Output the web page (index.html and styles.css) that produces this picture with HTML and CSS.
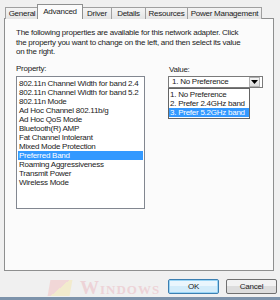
FILE: index.html
```html
<!DOCTYPE html>
<html lang="en">
<head>
  <meta charset="UTF-8">
  <title>Adapter Properties - Advanced</title>
  <link rel="stylesheet" href="styles.css">
</head>
<body>
  <div class="dialog">
    <div class="tabs">
      <div class="tab tab-general">General</div>
      <div class="tab tab-advanced active">Advanced</div>
      <div class="tab tab-driver">Driver</div>
      <div class="tab tab-details">Details</div>
      <div class="tab tab-resources">Resources</div>
      <div class="tab tab-power">Power Management</div>
    </div>

    <div class="panel">
      <p class="intro">The following properties are available for this network adapter. Click the property you want to change on the left, and then select its value on the right.</p>

      <div class="columns">
        <div class="prop-col">
          <div class="label">Property:</div>
          <ul class="listbox">
            <li>802.11n Channel Width for band 2.4</li>
            <li>802.11n Channel Width for band 5.2</li>
            <li>802.11n Mode</li>
            <li>Ad Hoc Channel 802.11b/g</li>
            <li>Ad Hoc QoS Mode</li>
            <li>Bluetooth(R) AMP</li>
            <li>Fat Channel Intolerant</li>
            <li>Mixed Mode Protection</li>
            <li class="selected">Preferred Band</li>
            <li>Roaming Aggressiveness</li>
            <li>Transmit Power</li>
            <li>Wireless Mode</li>
          </ul>
        </div>

        <div class="value-col">
          <div class="label">Value:</div>
          <div class="combo">
            <span class="combo-text">1. No Preference</span>
            <span class="combo-btn">
              <svg width="7" height="4" viewBox="0 0 7 4"><path d="M0 0h7L3.5 4z" fill="#000"/></svg>
            </span>
            <ul class="dropdown">
              <li>1. No Preference</li>
              <li>2. Prefer 2.4GHz band</li>
              <li class="selected">3. Prefer 5.2GHz band</li>
            </ul>
          </div>
        </div>
      </div>
    </div>

    <div class="footer">
      <div class="watermark">
        <span class="wm-logo"></span>
        <span class="wm-text">Windows</span>
      </div>
      <button class="btn btn-ok">OK</button>
      <button class="btn">Cancel</button>
    </div>
  </div>
  <div class="taskbar"></div>
</body>
</html>
```

FILE: styles.css
```css
body {
  margin: 0;
  width: 280px;
  height: 300px;
  background: #f0f0f0;
  font-family: 'Liberation Sans', Arial, sans-serif;
  font-size: 8px;
  letter-spacing: -0.25px;
  color: #222;
  overflow: hidden;
}
.dialog {
  padding: 5px 6px 0 4px;
  height: 297px;
  box-sizing: border-box;
  display: flex;
  flex-direction: column;
}
.tabs {
  display: flex;
  height: 14px;
  align-items: flex-end;
  padding-left: 1px;
  margin-bottom: -1px;
  position: relative;
  z-index: 1;
}
.tab {
  height: 12px;
  line-height: 12px;
  border: 1px solid #a0a0a0;
  border-bottom: none;
  margin-right: -1px;
  background: linear-gradient(#f4f4f4, #e4e4e4);
  color: #222;
  white-space: nowrap;
  text-align: center;
  box-sizing: border-box;
  height: 12px;
}
.tab-general { width: 34px; }
.tab-advanced { width: 46px; }
.tab-driver { width: 30px; }
.tab-details { width: 35px; }
.tab-resources { width: 43px; }
.tab-power { width: 75px; }
.tab.active {
  height: 15px;
  line-height: 13px;
  margin: 0 -1px 0 -1px;
  background: #fbfbfb;
  position: relative;
  z-index: 2;
  border-color: #8e8f8f;
}
.panel {
  height: 253px;
  border: 1px solid #8e8f8f;
  background: #fbfbfb;
  padding: 9px 10px 0 11px;
  box-sizing: border-box;
}
.intro {
  margin: 0;
  line-height: 9.5px;
  padding-right: 20px;
}
.columns {
  display: flex;
  margin-top: 7px;
}
.label {
  line-height: 9px;
  margin-bottom: 3px;
}
.prop-col {
  width: 131px;
}
.listbox {
  list-style: none;
  margin: 0;
  padding: 2px 1px;
  height: 133px;
  box-sizing: border-box;
  border: 1px solid #828790;
  background: #fff;
}
.listbox li,
.dropdown li {
  height: 9px;
  line-height: 9px;
  padding-left: 1px;
  white-space: nowrap;
  overflow: hidden;
}
.selected {
  background: #3399ff;
  color: #fff;
}
.value-col {
  margin-left: 23px;
  margin-top: 1px;
}
.value-col .label {
  margin-bottom: 2px;
  padding-left: 1px;
}
.combo {
  position: relative;
  width: 95px;
  height: 12px;
  box-sizing: border-box;
  border: 1px solid #7a7a7a;
  background: #fff;
  display: flex;
  align-items: center;
}
.combo-text {
  flex: 1;
  padding-left: 3px;
}
.combo-btn {
  width: 9px;
  height: 8px;
  margin-right: 2px;
  border: 1px solid #b0b0b0;
  background: linear-gradient(#f6f6f6, #dcdcdc);
  display: flex;
  align-items: center;
  justify-content: center;
}
.dropdown {
  list-style: none;
  position: absolute;
  top: 11px;
  left: -1px;
  width: 80px;
  margin: 0;
  padding: 1px 0;
  border: 1px solid #646464;
  background: #fff;
}
.footer {
  flex: 1;
  display: flex;
  justify-content: flex-end;
  align-items: center;
  gap: 7px;
  position: relative;
  padding-top: 4px;
  margin-right: -3px;
}
.btn {
  width: 51px;
  height: 15px;
  padding: 0;
  font-family: inherit;
  font-size: 8px;
  letter-spacing: -0.25px;
  color: #222;
  border: 1px solid #707070;
  border-radius: 2px;
  background: linear-gradient(#f2f2f2 50%, #dddddd 50%);
  position: relative;
}
.btn-ok {
  border-color: #3c7fb1;
  box-shadow: inset 0 0 0 1px #9ad5f5;
  background: linear-gradient(#eaf6fd 50%, #d3ecfa 50%);
}
.watermark {
  position: absolute;
  left: 45px;
  top: 6px;
  display: flex;
  align-items: center;
  gap: 9px;
  opacity: 0.4;
}
.wm-logo {
  width: 22px;
  height: 16px;
  background: linear-gradient(135deg, #f4b4b4 50%, #f7e59a 50%);
  transform: skewX(-10deg);
}
.wm-text {
  font-family: 'Liberation Serif', serif;
  font-variant: small-caps;
  font-weight: bold;
  font-size: 19px;
  letter-spacing: 1px;
  color: #e9a9b3;
}
.taskbar {
  height: 3px;
  background: #7d93ab;
}
```
